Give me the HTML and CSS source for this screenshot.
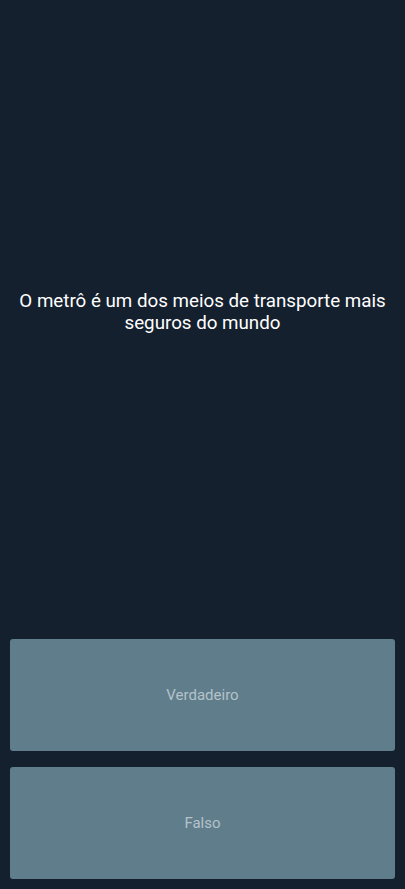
FILE: index.html
```html
<!DOCTYPE html>
<html lang="pt">
<head>
<meta charset="utf-8">
<title>Quiz</title>
<link rel="stylesheet" href="styles.css">
</head>
<body>
<main class="screen">
  <section class="question">
    <p class="question-text">O metrô é um dos meios de transporte mais seguros do mundo</p>
  </section>
  <section class="answers">
    <button class="answer">Verdadeiro</button>
    <button class="answer">Falso</button>
  </section>
</main>
</body>
</html>
```
FILE: styles.css
```css
html, body {
  margin: 0;
  padding: 0;
  height: 100%;
  background: #15202e;
}
.screen {
  height: 889px;
  display: flex;
  flex-direction: column;
  font-family: Roboto, "Liberation Sans", sans-serif;
}
.question {
  flex: 1;
  display: flex;
  align-items: center;
  justify-content: center;
  padding: 0 12px;
}
.question-text {
  margin: 0;
  color: #ffffff;
  font-size: 18.75px;
  line-height: 22px;
  text-align: center;
}
.answers {
  display: flex;
  flex-direction: column;
  gap: 16px;
  padding: 15px 10px 10px;
}
.answer {
  height: 112px;
  border: none;
  border-radius: 3px;
  background: #607d8b;
  color: #b4c2c9;
  font-family: Roboto, "Liberation Sans", sans-serif;
  font-size: 15px;
  padding: 0;
}
```
